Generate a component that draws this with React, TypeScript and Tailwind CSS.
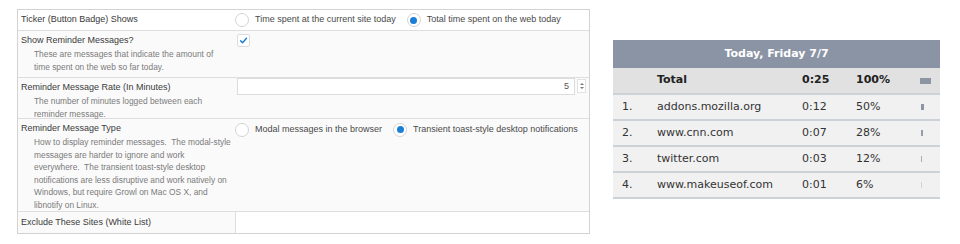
import React from 'react'

const ui = { fontFamily: '"Liberation Sans", Arial, sans-serif' }
const verdana = { fontFamily: '"DejaVu Sans", Verdana, sans-serif' }

function Radio({ checked }: { checked?: boolean }) {
  return (
    <span className="flex h-[14px] w-[14px] shrink-0 items-center justify-center rounded-full border border-[#d4d4d4] bg-white">
      {checked && <span className="h-[7px] w-[7px] rounded-full bg-[#1b7fd6]" />}
    </span>
  )
}

function Label({ title, desc }: { title: string; desc?: string[] }) {
  return (
    <div className="w-[217px] shrink-0 pl-[3px] pt-[3px]">
      <div className="leading-[13px] text-[#3a3a3a]">{title}</div>
      {desc && (
        <div className="mt-[1px] pl-[13px] text-[8.4px] text-[#7a7a7a]">
          {desc.map((line) => (
            <div key={line} className="whitespace-pre leading-[12.5px]">{line}</div>
          ))}
        </div>
      )}
    </div>
  )
}

const sites = [
  { n: '1.', site: 'addons.mozilla.org', time: '0:12', pct: '50%', bar: 3, color: 'bg-[#8d95a3]' },
  { n: '2.', site: 'www.cnn.com', time: '0:07', pct: '28%', bar: 2, color: 'bg-[#959cab]' },
  { n: '3.', site: 'twitter.com', time: '0:03', pct: '12%', bar: 1, color: 'bg-[#a7adb8]' },
  { n: '4.', site: 'www.makeuseof.com', time: '0:01', pct: '6%', bar: 1, color: 'bg-[#cfd3da]' },
]

export default function App() {
  return (
    <div className="flex h-[244px] w-[960px] bg-white">
      {/* options panel */}
      <div
        className="ml-[17px] mt-[9px] flex h-[225px] w-[573px] flex-col border border-[#d3d3d3] bg-[#fafafa] text-[9px]"
        style={ui}
      >
        <div className="flex h-[21px] items-center border-b border-[#dedede] bg-white">
          <div className="w-[217px] shrink-0 pl-[3px] text-[#3a3a3a]">Ticker (Button Badge) Shows</div>
          <div className="flex items-center text-[#4a4a4a]">
            <Radio />
            <span className="ml-[6px]">Time spent at the current site today</span>
            <span className="ml-[11px]"><Radio checked /></span>
            <span className="ml-[6px]">Total time spent on the web today</span>
          </div>
        </div>

        <div className="flex h-[47px] border-b border-[#dedede]">
          <Label
            title="Show Reminder Messages?"
            desc={['These are messages that indicate the amount of', 'time spent on the web so far today.']}
          />
          <div className="pl-[2px] pt-[3px]">
            <span className="flex h-[13px] w-[13px] items-center justify-center rounded-[2px] border border-[#dcdcdc] bg-white">
              <svg viewBox="0 0 10 10" className="h-[9px] w-[9px]">
                <path d="M1.8 5.4 L4 7.4 L8.3 2.4" fill="none" stroke="#1b7fd6" strokeWidth="1.6" strokeLinecap="round" strokeLinejoin="round" />
              </svg>
            </span>
          </div>
        </div>

        <div className="flex h-[41px] border-b border-[#dedede]">
          <Label
            title="Reminder Message Rate (In Minutes)"
            desc={['The number of minutes logged between each', 'reminder message.']}
          />
          <div className="flex flex-1 items-start pl-[2px]">
            <div className="flex h-[17px] w-[338px] items-center justify-end border border-[#dcdcdc] bg-white pr-[5px] text-[#555]">
              5
            </div>
            <div className="ml-[2px] mt-[1px] flex h-[14px] w-[9px] flex-col items-center justify-center gap-[2px] border border-[#e2e2e2] bg-white">
              <span className="h-0 w-0 border-x-[2px] border-b-[2px] border-x-transparent border-b-[#777]" />
              <span className="h-0 w-0 border-x-[2px] border-t-[2px] border-x-transparent border-t-[#777]" />
            </div>
          </div>
        </div>

        <div className="flex h-[93px] border-b border-[#dedede]">
          <Label
            title="Reminder Message Type"
            desc={[
              'How to display reminder messages.  The modal-style',
              'messages are harder to ignore and work',
              'everywhere.  The transient toast-style desktop',
              'notifications are less disruptive and work natively on',
              'Windows, but require Growl on Mac OS X, and',
              'libnotify on Linux.',
            ]}
          />
          <div className="flex h-[21px] items-center text-[#4a4a4a]">
            <Radio />
            <span className="ml-[6px]">Modal messages in the browser</span>
            <span className="ml-[11px]"><Radio checked /></span>
            <span className="ml-[6px]">Transient toast-style desktop notifications</span>
          </div>
        </div>

        <div className="flex flex-1 items-stretch">
          <div className="flex w-[218px] shrink-0 items-center border-r border-[#dedede] pl-[3px] text-[#3a3a3a]">
            Exclude These Sites (White List)
          </div>
          <div className="flex-1 bg-white" />
        </div>
      </div>

      {/* today table */}
      <div className="ml-[23px] mt-[40px] flex w-[327px] flex-col self-start text-[11px]" style={verdana}>
        <div className="flex h-[28px] items-center justify-center bg-[#8a94a4] font-bold text-white">
          Today, Friday 7/7
        </div>
        <div className="flex h-[27px] items-center border-b-2 border-[#cdd1d8] bg-[#e1e1e1] font-bold text-[#222]">
          <span className="w-[44px]" />
          <span className="w-[145px]">Total</span>
          <span className="w-[54px]">0:25</span>
          <span className="w-[64px]">100%</span>
          <span className="h-[6px] w-[11px] bg-[#8d95a3]" />
        </div>
        {sites.map((s) => (
          <div
            key={s.n}
            className="flex h-[26px] items-center border-b-2 border-[#cdd1d8] bg-[#f1f1f1] text-[#333]"
          >
            <span className="w-[44px] pl-[9px]">{s.n}</span>
            <span className="w-[145px]">{s.site}</span>
            <span className="w-[54px]">{s.time}</span>
            <span className="w-[65px]">{s.pct}</span>
            <span className={`h-[6px] ${s.color}`} style={{ width: s.bar }} />
          </div>
        ))}
      </div>
    </div>
  )
}
